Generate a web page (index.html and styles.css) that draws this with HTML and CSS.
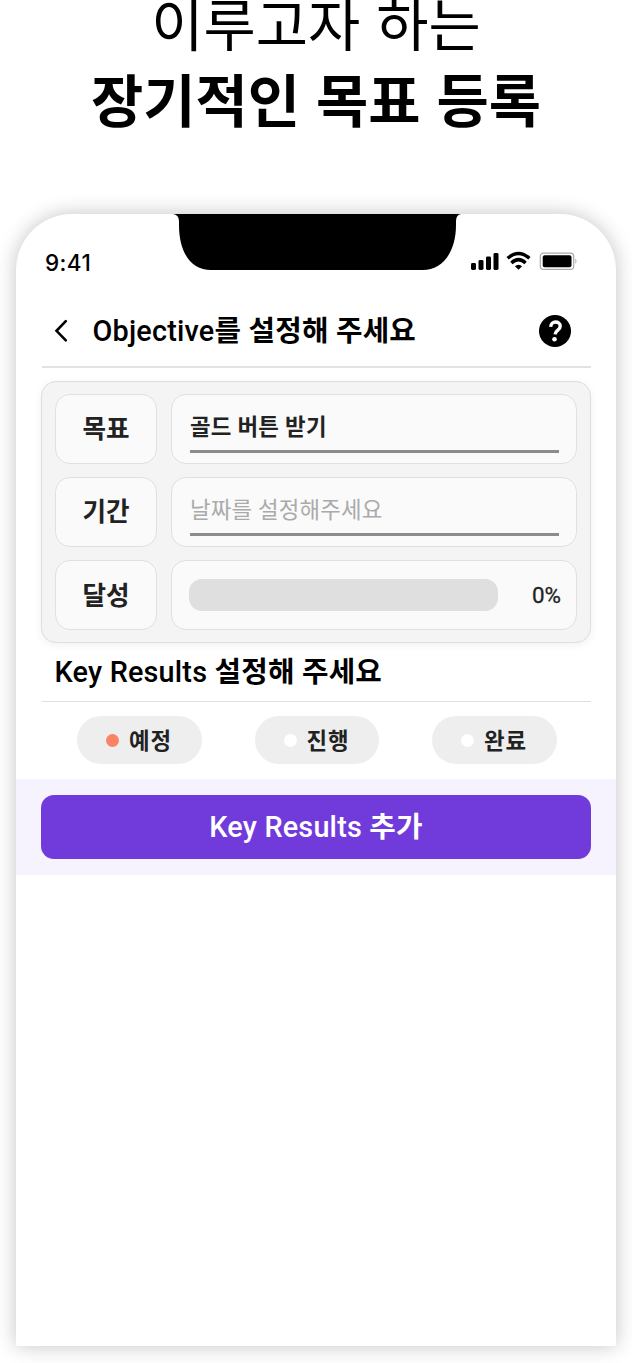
FILE: index.html
```html
<!DOCTYPE html>
<html lang="ko">
<head>
<meta charset="utf-8">
<title>장기적인 목표 등록</title>
<link rel="stylesheet" href="styles.css">
</head>
<body>
<h1 class="headline"><span class="headline-light">이루고자 하는</span><span class="headline-strong">장기적인 목표 등록</span></h1>
<main class="phone">
  <header class="status">
    <span class="time">9:41</span>
    <svg class="notch" viewBox="0 0 288 56"><path d="M0 0H288Q283 1 283 7V11C283 40 268 56 250 56H38C19 56 6 40 6 11V7Q6 1 0 0Z"/></svg>
    <svg class="indicators" viewBox="0 0 110 22">
      <rect x="1" y="13" width="5" height="7" rx="1.4"/><rect x="8.5" y="10" width="5" height="10" rx="1.4"/><rect x="16" y="6.5" width="5" height="13.5" rx="1.4"/><rect x="23.5" y="3" width="5" height="17" rx="1.4"/>
      <path class="wave" d="M37.6 8.3Q48.5-1.3 59.4 8.3M41.4 12.9Q48.5 6.4 55.6 12.9"/>
      <path d="M44.9 16.3Q48.5 13.1 52.1 16.3L48.5 19.8Z"/>
      <rect class="battery" x="70.3" y="3.2" width="33.4" height="16.2" rx="3.2"/>
      <rect x="72.7" y="5.3" width="28.8" height="12" rx="2"/>
      <path class="battery-cap" d="M105.4 8.5Q107.6 11 105.4 14Z"/>
    </svg>
  </header>
  <section class="title-bar">
    <svg class="back" viewBox="0 0 16 24"><path d="M12.8 2.2L3.5 11.8L12.8 21.4"/></svg>
    <h2 class="title">Objective<b>를 설정해 주세요</b></h2>
    <svg class="help" viewBox="0 0 32 32"><circle cx="16" cy="16" r="16"/><path d="M11.7 11.9C11.9 5.2 21.2 5.6 21.2 11.3C21.2 15.2 16.3 14.9 16.1 19.4"/><circle class="help-dot" cx="15.5" cy="24.2" r="2.3"/></svg>
  </section>
  <section class="goal-card">
    <div class="label">목표</div>
    <div class="field"><div class="input"><span class="value">골드 버튼 받기</span></div></div>
    <div class="label">기간</div>
    <div class="field"><div class="input"><span class="placeholder">날짜를 설정해주세요</span></div></div>
    <div class="label">달성</div>
    <div class="field achievement"><div class="track"></div><span class="percent">0%</span></div>
  </section>
  <h2 class="results-title">Key Results <b>설정해 주세요</b></h2>
  <nav class="chips">
    <div class="chip"><i class="dot dot-active"></i><span>예정</span></div>
    <div class="chip"><i class="dot"></i><span>진행</span></div>
    <div class="chip"><i class="dot"></i><span>완료</span></div>
  </nav>
  <div class="action"><button class="add">Key Results <b>추가</b></button></div>
</main>
</body>
</html>
```

FILE: styles.css
```css
* { box-sizing: border-box; }
body {
  margin: 0;
  width: 632px;
  height: 1363px;
  overflow: hidden;
  background: #fff;
  color: #000;
  font-family: Roboto, "Noto Sans CJK KR", sans-serif;
}
b { font-weight: 700; }
.headline {
  height: 214px;
  margin: 0;
  display: flex;
  flex-direction: column;
  align-items: center;
  font: 400 56.8px/76px "Noto Sans CJK KR", sans-serif;
  white-space: nowrap;
}
.headline-light { margin-top: -17px; }
.headline-strong { font-weight: 700; }
.phone {
  width: 600px;
  height: 1132px;
  margin: 0 16px;
  background: #fff;
  border-radius: 56px 56px 0 0;
  box-shadow: 0 0 20px rgba(0, 0, 0, .24);
}
.status { display: flex; height: 80px; }
.time {
  width: 157px;
  padding: 35px 0 0 29px;
  font: 500 22.5px/27px Inter, sans-serif;
  letter-spacing: .4px;
}
.notch { width: 288px; height: 56px; }
.indicators { width: 110px; height: 22px; margin: 36px 0 0 9px; }
.wave { fill: none; stroke: #000; stroke-width: 3.4; }
.battery { fill: none; stroke: #aaa; stroke-width: 1.2; }
.battery-cap { fill: #aaa; }
.title-bar {
  height: 74px;
  margin: 0 25.5px;
  padding: 2px 19.5px 0 11px;
  display: flex;
  align-items: center;
  border-bottom: 2px solid #e2e2e2;
}
.back { width: 16px; height: 24px; fill: none; stroke: #000; stroke-width: 2.6; stroke-linecap: round; }
.title { margin: 0 auto 0 24px; font-size: 28.8px; font-weight: 500; line-height: 40px; letter-spacing: .2px; white-space: nowrap; }
.help { width: 32px; height: 32px; }
.help path { fill: none; stroke: #fff; stroke-width: 3.4; }
.help .help-dot { fill: #fff; }
.goal-card {
  height: 262px;
  margin: 12.5px 25px 0;
  padding: 12px 13px;
  display: grid;
  grid-template-columns: 102px 406px;
  grid-template-rows: repeat(3, 70.5px);
  gap: 12.7px 14px;
  background: #f4f4f4;
  border: 1.5px solid #dedede;
  border-radius: 15px;
  box-shadow: 0 2px 8px rgba(0, 0, 0, .06);
}
.label, .field { background: #fafafa; border: 1.5px solid #e0e0e0; border-radius: 15px; }
.label {
  display: flex;
  align-items: center;
  justify-content: center;
  padding-bottom: 4px;
  color: #222;
  font-size: 25.6px;
  font-weight: 700;
}
.field { padding: 10px 17px 0 18px; }
.input { height: 48px; border-bottom: 3px solid #8c8c8c; line-height: 45px; }
.value { color: #222; font-size: 22.4px; font-weight: 700; letter-spacing: .25px; }
.placeholder { color: #aaa; font-size: 22.4px; letter-spacing: .15px; }
.achievement { padding: 0 15px 0 17px; display: flex; align-items: center; justify-content: space-between; }
.track { width: 309px; height: 32px; border-radius: 13px; background: #dfdfdf; }
.percent { color: #222; font-size: 22.4px; -webkit-text-stroke: .3px #222; }
.results-title {
  height: 59px;
  margin: 0 25.5px;
  padding: 9px 0 0 13px;
  border-bottom: 1.5px solid #dfdfdf;
  font-size: 28.8px;
  font-weight: 500;
  line-height: 40px;
  letter-spacing: .2px;
  white-space: nowrap;
}
.chips { display: flex; gap: 53px; padding: 14.5px 0 14.5px 61px; }
.chip {
  width: 124.5px;
  height: 48px;
  padding-left: 29px;
  display: flex;
  align-items: center;
  gap: 10px;
  border-radius: 24px;
  background: #eee;
  color: #222;
  font-size: 22.4px;
  font-weight: 700;
  letter-spacing: 1px;
}
.chip span { padding-bottom: 3px; }
.dot { width: 13px; height: 13px; border-radius: 50%; background: #fff; }
.dot-active { background: #f88465; }
.action { height: 96px; padding: 16px 25px; background: #f6f3ff; }
.add {
  display: block;
  width: 550px;
  height: 64px;
  padding: 0;
  border: 0;
  border-radius: 13px;
  background: #713bdb;
  color: #fff;
  font: 500 28.8px/64px Roboto, "Noto Sans CJK KR", sans-serif;
  letter-spacing: .2px;
}
```
